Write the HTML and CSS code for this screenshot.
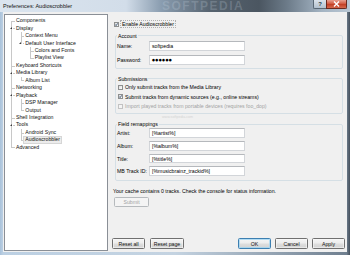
FILE: index.html
```html
<!DOCTYPE html>
<html>
<head>
<meta charset="utf-8">
<title>Preferences: Audioscrobbler</title>
<link rel="stylesheet" href="styles.css">
</head>
<body>
<div class="window">
  <div class="titlebar">
    <span class="title">Preferences: Audioscrobbler</span>
    <span class="watermark">SOFTPEDIA</span>
    <div class="caption-btns">
      <span class="cap help">?</span>
      <span class="cap close"><svg width="7" height="6" viewBox="0 0 7 6"><path d="M1 0.5 L6 5.5 M6 0.5 L1 5.5" stroke="#fff" stroke-width="1.4"/></svg></span>
    </div>
  </div>
  <div class="client">
    <div class="tree">
      <ul class="root">
        <li><span class="node">Components</span></li>
        <li class="open"><span class="node">Display</span>
          <ul>
            <li><span class="node">Context Menu</span></li>
            <li class="open"><span class="node">Default User Interface</span>
              <ul>
                <li><span class="node">Colors and Fonts</span></li>
                <li><span class="node">Playlist View</span></li>
              </ul>
            </li>
          </ul>
        </li>
        <li><span class="node">Keyboard Shortcuts</span></li>
        <li class="open"><span class="node">Media Library</span>
          <ul>
            <li><span class="node">Album List</span></li>
          </ul>
        </li>
        <li><span class="node">Networking</span></li>
        <li class="open"><span class="node">Playback</span>
          <ul>
            <li><span class="node">DSP Manager</span></li>
            <li><span class="node">Output</span></li>
          </ul>
        </li>
        <li><span class="node">Shell Integration</span></li>
        <li class="open"><span class="node">Tools</span>
          <ul>
            <li><span class="node">Android Sync</span></li>
            <li><span class="node sel">Audioscrobbler</span></li>
          </ul>
        </li>
        <li><span class="node">Advanced</span></li>
      </ul>
    </div>
    <div class="page">
      <div class="content">
        <div class="enable">
          <span class="cb"><svg width="3" height="3" viewBox="0 0 3 3"><path d="M0.2 1.5 L1.1 2.6 L2.8 0.3" stroke="#1e3a5c" stroke-width="0.8" fill="none"/></svg></span>
          <span class="focus">Enable Audioscrobbler</span>
        </div>
        <fieldset class="group account">
          <legend>Account</legend>
          <div class="field"><span class="lbl">Name:</span><span class="input">softpedia</span></div>
          <div class="field second"><span class="lbl">Password:</span><span class="input pw">●●●●●●</span></div>
        </fieldset>
        <fieldset class="group submissions">
          <legend>Submissions</legend>
          <div class="crow first"><span class="cb"></span><span>Only submit tracks from the Media Library</span></div>
          <div class="crow"><span class="cb"><svg width="3" height="3" viewBox="0 0 3 3"><path d="M0.2 1.5 L1.1 2.6 L2.8 0.3" stroke="#1e3a5c" stroke-width="0.8" fill="none"/></svg></span><span>Submit tracks from dynamic sources (e.g., online streams)</span></div>
          <div class="crow disabled"><span class="cb"></span><span>Import played tracks from portable devices (requires foo_dop)</span></div>
          <span class="wm2">www.softpedia.com</span>
        </fieldset>
        <fieldset class="group remap">
          <legend>Field remappings</legend>
          <div class="frow first"><span class="lbl">Artist:</span><span class="input">[%artist%]</span></div>
          <div class="frow"><span class="lbl">Album:</span><span class="input">[%album%]</span></div>
          <div class="frow"><span class="lbl">Title:</span><span class="input">[%title%]</span></div>
          <div class="frow"><span class="lbl">MB Track ID:</span><span class="input">[%musicbrainz_trackid%]</span></div>
        </fieldset>
        <div class="cache">Your cache contains 0 tracks. Check the console for status information.</div>
        <span class="btn submit">Submit</span>
      </div>
      <div class="buttons">
        <div class="bgroup">
          <span class="btn">Reset all</span>
          <span class="btn">Reset page</span>
        </div>
        <div class="bgroup">
          <span class="btn default">OK</span>
          <span class="btn">Cancel</span>
          <span class="btn">Apply</span>
        </div>
      </div>
    </div>
  </div>
</div>
</body>
</html>
```

FILE: styles.css
```css
* { box-sizing: border-box; }
html, body { margin: 0; padding: 0; }
body {
  width: 350px;
  height: 255px;
  overflow: hidden;
  font-family: "Liberation Sans", Arial, sans-serif;
  font-size: 5.2px;
  color: #000;
  background: #9fb6cc;
}
.window {
  width: 350px;
  height: 255px;
  display: flex;
  flex-direction: column;
  background: linear-gradient(to right, #a9c2da 0, #bcd0e3 3px, #c4d3e1 50%, #6f7f8f 99%, #45505c 100%);
}
.titlebar {
  height: 12px;
  flex: none;
  position: relative;
  overflow: hidden;
  background: linear-gradient(to right, #dbe5ef 0, #d2dde9 36%, #8a9db0 46%, #56636f 60%, #4b5661 74%, #6c7b89 82%, #a4b4c3 92%, #b8c6d3 100%);
  display: flex;
  align-items: center;
}
.title {
  font-size: 5.5px;
  margin-left: 3px;
  margin-top: -1px;
  color: #111;
  position: relative;
  z-index: 1;
}
.watermark {
  position: absolute;
  left: 162px;
  top: 0;
  font-size: 12px;
  line-height: 12px;
  font-weight: bold;
  letter-spacing: 1.5px;
  color: rgba(205, 218, 230, 0.22);
}
.caption-btns {
  position: absolute;
  right: 3px;
  top: 0;
  display: flex;
}
.cap {
  height: 9px;
  display: flex;
  align-items: center;
  justify-content: center;
  border: 1px solid #5a6874;
  border-top: none;
}
.help {
  width: 13px;
  background: linear-gradient(#dbe3eb, #b3c1ce);
  border-radius: 0 0 0 2px;
  font-size: 6px;
  font-weight: bold;
  color: #2b3a48;
  border-right: none;
}
.close {
  width: 21px;
  background: linear-gradient(#e8a090, #d0553c 50%, #c23d22 51%, #d5694e);
  border-radius: 0 0 2px 0;
  border-color: #6b2a1f;
}
.client {
  flex: 1;
  margin: 0 3px 3px 3px;
  background: #f0f0f0;
  display: flex;
  gap: 4px;
  padding: 2px 2px 1px 1px;
}
.tree {
  width: 104px;
  flex: none;
  background: #fff;
  border: 1px solid #8a8f96;
  padding-top: 2.3px;
  overflow: hidden;
}
.tree ul {
  list-style: none;
  margin: 0 0 0 4.7px;
  padding: 0;
}
.tree ul.root { margin-left: 6.3px; }
.tree li {
  position: relative;
  padding-left: 4.7px;
}
.tree li::before {
  content: "";
  position: absolute;
  left: 0;
  top: 3.7px;
  width: 3.6px;
  border-top: 1px solid #c8c8c8;
}
.tree li::after {
  content: "";
  position: absolute;
  left: 0;
  top: 0;
  bottom: 0;
  border-left: 1px solid #c8c8c8;
}
.tree li:last-child::after { bottom: auto; height: 4.2px; }
.tree ul.root > li:first-child::after { top: 3.7px; }
.node {
  display: inline-block;
  position: relative;
  line-height: 7.45px;
  height: 7.45px;
  white-space: nowrap;
  color: #111;
}
.tree li.open > .node::before {
  content: "";
  position: absolute;
  left: -6.2px;
  top: 2.4px;
  width: 0;
  height: 0;
  border-right: 2.6px solid #3a3a3a;
  border-top: 2.6px solid transparent;
  z-index: 1;
}
.tree li.open > .node::after {
  content: "";
  position: absolute;
  left: -6.8px;
  top: 1.6px;
  width: 4px;
  height: 4px;
  background: #fff;
}
.node.sel {
  background: #ececec;
  border: 1px solid #d6d6d6;
  line-height: 5.45px;
  padding: 0 1px;
  margin-left: -2px;
}
.page {
  flex: 1;
  display: flex;
  flex-direction: column;
  justify-content: space-between;
}
.content {
  display: flex;
  flex-direction: column;
  align-items: flex-start;
  padding-left: 1px;
}
.enable {
  margin-top: 6px;
  margin-left: 1px;
  height: 8px;
  display: flex;
  align-items: center;
  gap: 1px;
}
.cb {
  width: 5px;
  height: 5px;
  flex: none;
  border: 1px solid #8e8f8f;
  background: linear-gradient(135deg, #dcdcdc, #ffffff);
  display: flex;
  align-items: center;
  justify-content: center;
  overflow: hidden;
}
.cb svg { display: block; }
.focus {
  display: inline-block;
  height: 8px;
  padding: 0 1px;
  border: 1px dotted #b0b0b0;
  line-height: 6px;
}
.group {
  align-self: stretch;
  margin: 4.5px 2px 0 2px;
  border: 1px solid #d5dfe5;
  border-radius: 2px;
  padding: 0 0 3px 1px;
  min-width: 0;
  position: relative;
}
.group legend {
  padding: 0 1px;
  line-height: 6px;
  font-size: 5.2px;
}
.field {
  display: flex;
  align-items: center;
  height: 10px;
  margin-top: 2px;
}
.field.second { margin-top: 4px; }
.lbl {
  width: 32px;
  flex: none;
  white-space: nowrap;
}
.input {
  width: 96px;
  height: 100%;
  background: #fff;
  border: 1px solid #d2d5d9;
  border-top-color: #b5b8bc;
  padding-left: 2px;
  display: flex;
  align-items: center;
  white-space: nowrap;
  overflow: hidden;
}
.input.pw {
  font-family: "DejaVu Sans", sans-serif;
  font-size: 3.4px;
  letter-spacing: 0.4px;
}
.submissions { margin-top: 7px; padding-bottom: 2.2px; }
.crow {
  height: 9.5px;
  display: flex;
  align-items: center;
  gap: 2px;
  padding-left: 1px;
}
.crow.first { margin-top: 1.2px; }
.crow.disabled { color: #a3a3a3; }
.crow.disabled .cb { border-color: #c2c2c2; background: #f4f4f4; }
.wm2 {
  position: absolute;
  left: 46px;
  top: 33.5px;
  font-size: 3.6px;
  color: #d4d4d4;
}
.remap { margin-top: 7px; padding-bottom: 4.4px; }
.frow {
  display: flex;
  align-items: center;
  height: 9.5px;
  margin-top: 3.2px;
}
.frow.first { margin-top: 1px; }
.cache {
  margin-top: 7px;
  line-height: 6px;
  white-space: nowrap;
}
.btn {
  display: inline-flex;
  align-items: center;
  justify-content: center;
  width: 33px;
  height: 11px;
  border: 1px solid #707070;
  border-radius: 1.5px;
  background: linear-gradient(#f4f4f4 0%, #ececec 48%, #dedede 52%, #d2d2d2 100%);
  box-shadow: inset 0 0 0 0.5px #fbfbfb;
  white-space: nowrap;
  color: #111;
}
.btn.submit {
  margin-top: 3px;
  margin-left: 1px;
  width: 35px;
  height: 9.5px;
  border-color: #b6babd;
  background: #f4f4f4;
  color: #a3a3a3;
  box-shadow: none;
}
.btn.default {
  border-color: #3c7fb1;
  box-shadow: inset 0 0 0 0.7px #9fd5f3;
}
.buttons {
  display: flex;
  justify-content: space-between;
  margin-bottom: 2px;
}
.bgroup {
  display: flex;
  gap: 4px;
}
.bgroup:first-child .btn:last-child { width: 34px; margin-left: 1px; }
```
